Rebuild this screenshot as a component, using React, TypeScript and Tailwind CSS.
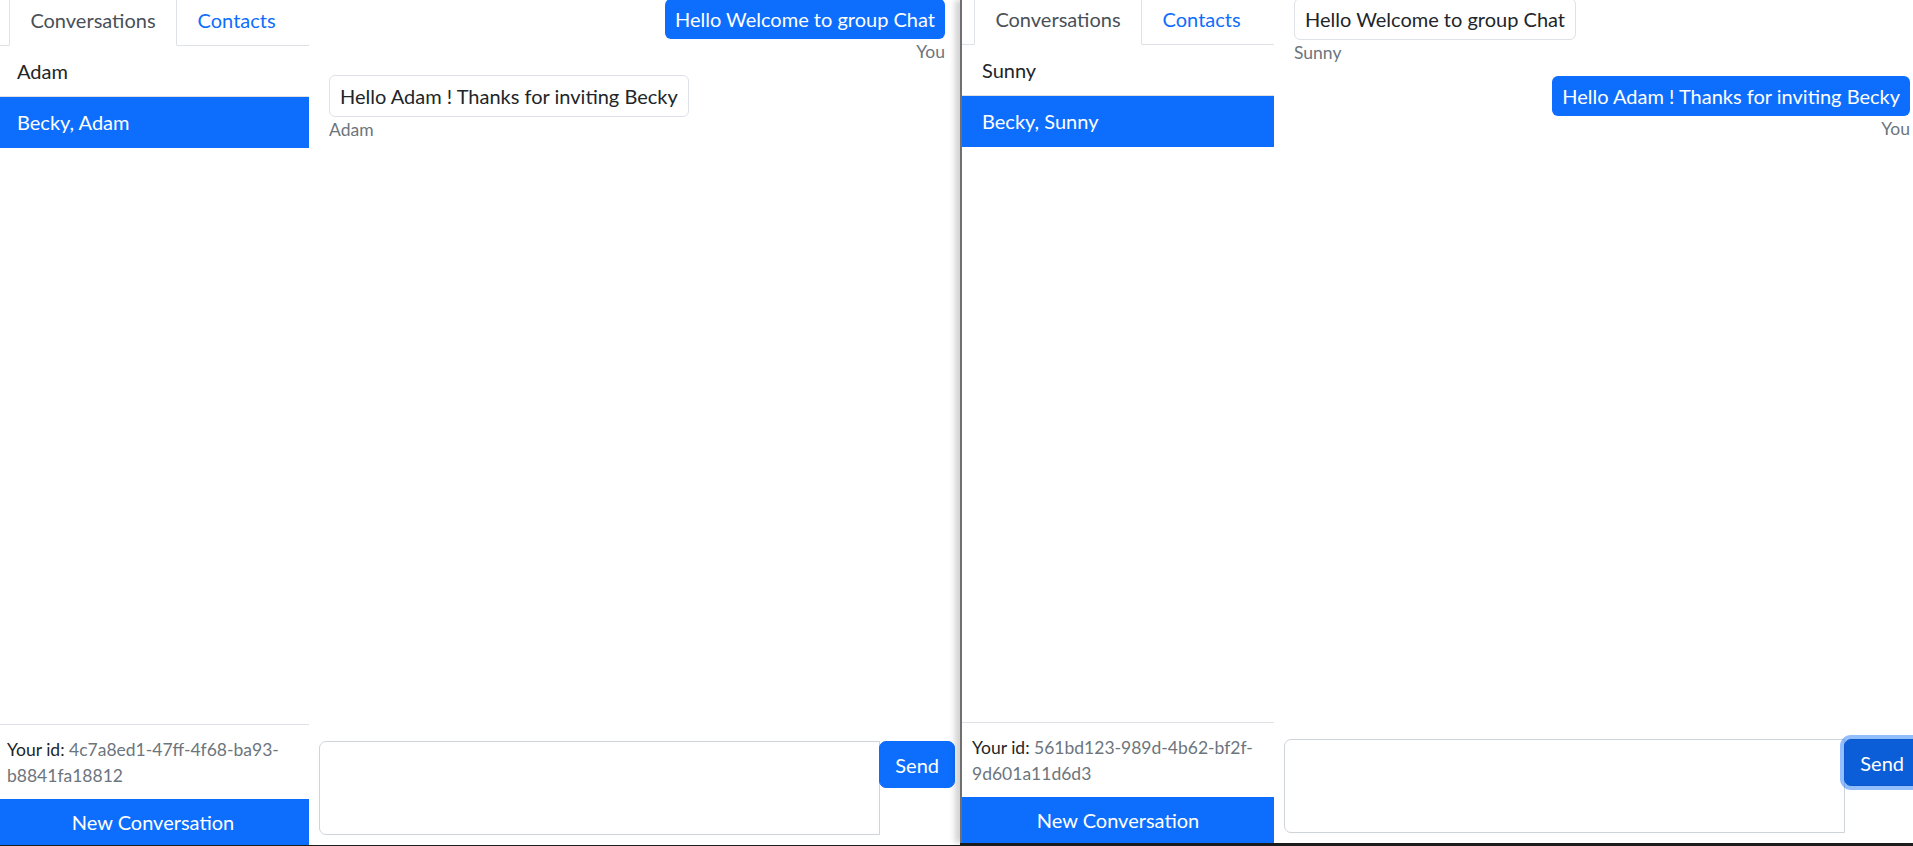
import React from "react";

type Message = { text: string; sender: string; fromMe: boolean };

type ChatProps = {
	conversations: { name: string; active?: boolean }[];
	id: [string, string];
	messages: Message[];
	sendFocused?: boolean;
};

const ChatWindow = ({ conversations, id, messages, sendFocused }: ChatProps) => {
	return <div className="flex h-full w-[968px]">
		{/* sidebar */}
		<div className="flex w-[312px] shrink-0 flex-col">
			<div className="flex justify-center border-b border-[#dee2e6]">
				<div className="-mb-px rounded-t-[7px] border border-[#dee2e6] border-b-white bg-white px-5 py-[10px] leading-[30px] text-[#495057]">
					Conversations
				</div>
				<div className="-mb-px border border-transparent px-5 py-[10px] leading-[30px] text-[#0d6efd]">
					Contacts
				</div>
			</div>

			<div className="flex-1 overflow-hidden">
				{conversations.map((c) => (
					<div
						key={c.name}
						className={
							c.active
								? "border-b border-[#0d6efd] bg-[#0d6efd] px-5 py-[10px] leading-[30px] text-white"
								: "border-b border-black/[0.125] px-5 py-[10px] leading-[30px] text-[#212529]"
						}
					>
						{c.name}
					</div>
				))}
			</div>

			<div className="border-t border-[#dee2e6] px-[10px] pb-[10px] pt-[12px] text-[17.5px] leading-[26px] text-[#212529]">
				Your id: <span className="text-[#6c757d]">{id[0]}</span>
				<br />
				<span className="text-[#6c757d]">{id[1]}</span>
			</div>
			<button className="h-[46px] w-full bg-[#0d6efd] leading-[30px] text-white">
				New Conversation
			</button>
		</div>

		{/* conversation */}
		<div className="flex min-w-0 flex-1 flex-col">
			<div className="flex-1 overflow-hidden">
				<div className="flex flex-col items-start px-5">
					{messages.map((m, i) => (
						<div key={i} className={m.fromMe ? "my-[5px] flex flex-col items-end self-end" : "my-[5px] flex flex-col"}>
							<div
								className={
									m.fromMe
										? "rounded-[6px] bg-[#0d6efd] px-[10px] py-[5px] leading-[30px] text-white"
										: "rounded-[6px] border border-[#dee2e6] px-[10px] py-[5px] leading-[30px] text-[#212529]"
								}
							>
								{m.text}
							</div>
							<div className={m.fromMe ? "text-right text-[17.5px] leading-[26px] text-[#6c757d]" : "text-[17.5px] leading-[26px] text-[#6c757d]"}>
								{m.fromMe ? "You" : m.sender}
							</div>
						</div>
					))}
				</div>
			</div>

			<form className="m-[10px] flex items-start">
				<textarea className="h-[94px] flex-1 resize-none rounded-l-[7px] border border-[#ced4da] bg-white px-3 py-2 outline-none" />
				<button
					type="button"
					className={
						sendFocused
							? "-ml-px rounded-[7px] border border-[#0a58ca] bg-[#0b5ed7] px-[15px] py-[7.5px] leading-[30px] text-white shadow-[0_0_0_4px_rgba(13,110,253,0.45)]"
							: "-ml-px rounded-[7px] border border-[#0d6efd] bg-[#0d6efd] px-[15px] py-[7.5px] leading-[30px] text-white"
					}
				>
					Send
				</button>
			</form>
		</div>
	</div>
}

export default function App() {
	return <div className="flex h-[846px] w-[1913px] overflow-hidden bg-[#1e1e1e] font-['Lato','Liberation_Sans',sans-serif] text-[20px]">
		<div className="h-[845px] w-[960px] shrink-0 overflow-hidden bg-white">
			<div className="-ml-[3px] -mt-[6px] h-[851px]">
				<ChatWindow
					conversations={[{ name: "Adam" }, { name: "Becky, Adam", active: true }]}
					id={["4c7a8ed1-47ff-4f68-ba93-", "b8841fa18812"]}
					messages={[
						{ text: "Hello Welcome to group Chat", sender: "You", fromMe: true },
						{ text: "Hello Adam ! Thanks for inviting Becky", sender: "Adam", fromMe: false },
					]}
				/>
			</div>
		</div>

		<div className="relative h-[843px] flex-1 overflow-hidden border-l-2 border-[#707070] bg-white shadow-[-5px_0_6px_rgba(0,0,0,0.18)]">
			<div className="-mt-[7px] h-[850px]">
				<ChatWindow
					conversations={[{ name: "Sunny" }, { name: "Becky, Sunny", active: true }]}
					id={["561bd123-989d-4b62-bf2f-", "9d601a11d6d3"]}
					messages={[
						{ text: "Hello Welcome to group Chat", sender: "Sunny", fromMe: false },
						{ text: "Hello Adam ! Thanks for inviting Becky", sender: "You", fromMe: true },
					]}
					sendFocused
				/>
			</div>
		</div>
	</div>
}
